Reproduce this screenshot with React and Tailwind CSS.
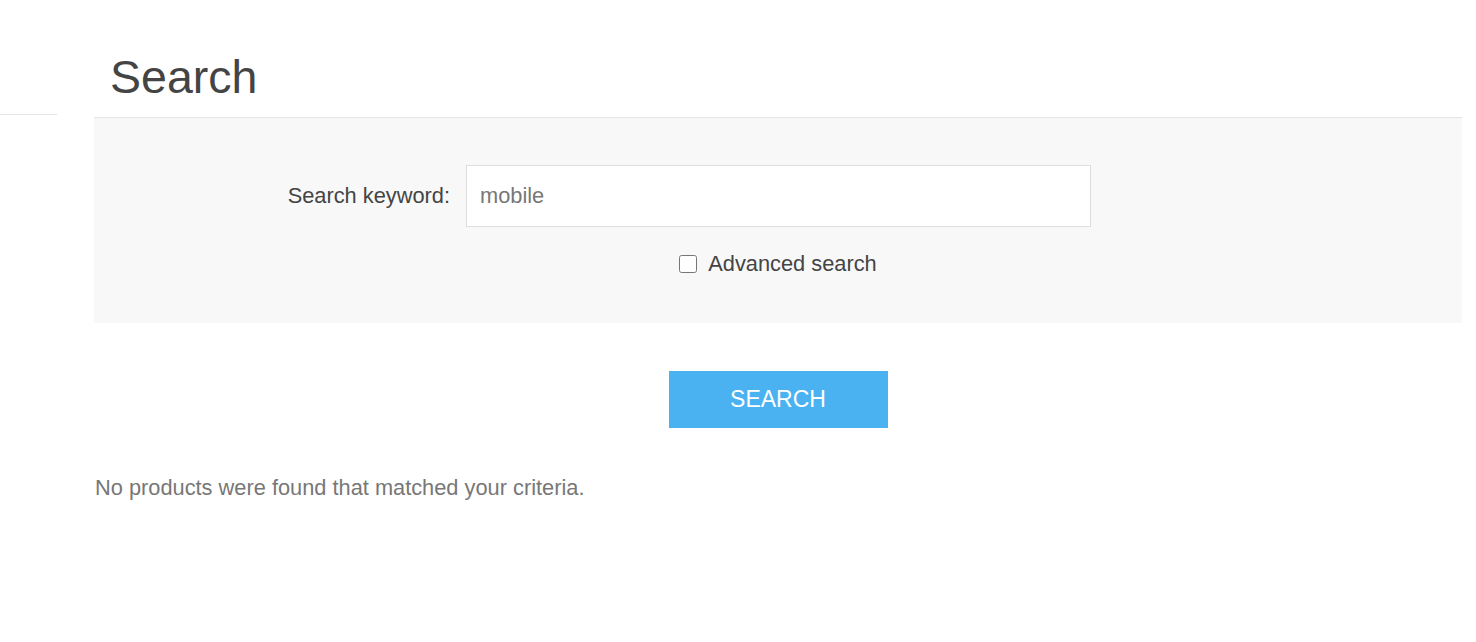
export default function App() {
  return (
    <div className="flex min-h-[642px] bg-white font-['Liberation_Sans',Arial,sans-serif]">
      <div className="w-[57px] shrink-0">
        <div className="h-[115px] border-b border-[#e4e4e4]" />
      </div>

      <main className="ml-[37px] w-[1368px] shrink-0">
        <div className="pt-[51px] pb-[14px] pl-[16px]">
          <h1 className="text-[46.5px] leading-[52px] text-[#444]">Search</h1>
        </div>

        <div className="h-[206px] border-t border-[#e4e4e4] bg-[#f8f8f8] pt-[47px]">
          <div className="flex items-center">
            <label className="w-[356px] text-right text-[21.8px] leading-[26px] text-[#444]">
              Search keyword:
            </label>
            <input
              type="text"
              defaultValue="mobile"
              className="ml-4 h-[62px] w-[625px] border border-[#dedede] bg-white px-[13px] text-[21.8px] text-[#777] outline-none"
            />
          </div>

          <div className="mt-[24px] flex items-center justify-center">
            <label className="flex items-center gap-[11px] text-[21.8px] leading-[26px] text-[#444]">
              <input type="checkbox" className="m-0 h-[18px] w-[18px]" />
              Advanced search
            </label>
          </div>
        </div>

        <div className="mt-[48px] flex justify-center">
          <button
            type="button"
            className="h-[57px] w-[219px] bg-[#4ab2f1] text-[23px] uppercase text-white"
          >
            Search
          </button>
        </div>

        <p className="mt-[47px] pl-px text-[21.8px] leading-[26px] text-[#777]">
          No products were found that matched your criteria.
        </p>
      </main>
    </div>
  );
}
